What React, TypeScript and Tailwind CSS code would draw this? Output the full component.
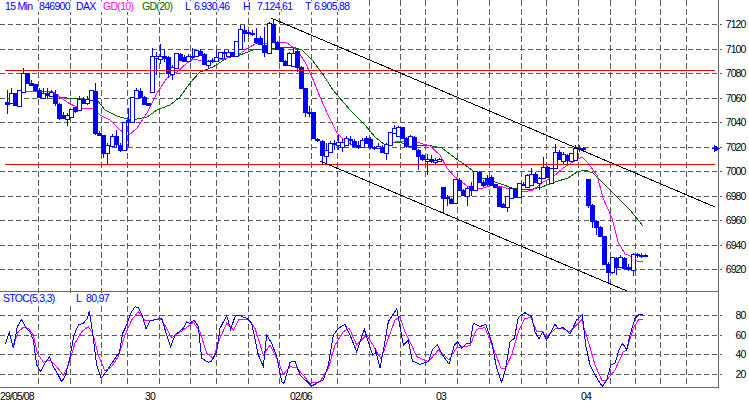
type Candle = [number, number, number, number, number, number];
type Pt = [number, number];

// x, wick top, wick bottom, body top, body bottom, filled
const candles: Candle[] = [
  [7, 90, 114, 102, 104, 1], [11, 88, 103, 93, 103, 0], [15, 93, 106, 93, 105, 1], [19, 90, 106, 90, 106, 0],
  [23, 68, 92, 73, 92, 0], [27, 73, 84, 73, 83, 1], [31, 80, 86, 83, 85, 1], [35, 84, 92, 84, 90, 1],
  [39, 88, 98, 90, 97, 1], [43, 88, 99, 93, 98, 0], [47, 88, 99, 93, 95, 1], [51, 90, 96, 92, 96, 0],
  [55, 90, 106, 94, 103, 1], [59, 103, 120, 104, 118, 1], [63, 112, 119, 115, 118, 1], [67, 113, 126, 115, 119, 0],
  [71, 109, 118, 109, 117, 0], [75, 107, 113, 107, 111, 1], [79, 96, 111, 99, 110, 0], [83, 97, 104, 99, 103, 1],
  [87, 96, 105, 99, 103, 0], [91, 90, 101, 90, 100, 0], [95, 83, 135, 91, 133, 1], [99, 131, 136, 133, 135, 1],
  [103, 135, 158, 135, 153, 1], [107, 143, 164, 145, 153, 0], [112, 134, 147, 136, 146, 0], [116, 130, 148, 136, 144, 1],
  [120, 143, 152, 145, 150, 1], [124, 122, 151, 122, 150, 0], [128, 108, 147, 120, 122, 1], [132, 97, 123, 97, 122, 0],
  [136, 88, 99, 90, 98, 0], [140, 88, 98, 91, 97, 1], [144, 96, 104, 97, 104, 1], [148, 103, 105, 103, 105, 1],
  [152, 48, 93, 56, 92, 0], [156, 52, 75, 56, 58, 0], [160, 44, 64, 56, 59, 0], [164, 49, 62, 56, 58, 1],
  [168, 56, 78, 57, 73, 1], [172, 65, 80, 67, 74, 0], [176, 53, 69, 53, 68, 0], [180, 53, 61, 54, 60, 1],
  [184, 55, 62, 57, 61, 1], [188, 54, 62, 56, 61, 0], [192, 48, 59, 56, 57, 1], [196, 50, 57, 50, 56, 0],
  [200, 49, 56, 51, 55, 1], [204, 53, 65, 54, 64, 1], [208, 60, 68, 61, 65, 0], [212, 58, 63, 60, 61, 1],
  [216, 50, 62, 57, 61, 0], [220, 52, 59, 52, 58, 0], [224, 50, 59, 52, 53, 1], [228, 50, 57, 52, 56, 0],
  [232, 52, 57, 52, 56, 1], [236, 41, 57, 41, 56, 0], [240, 25, 50, 29, 49, 0], [244, 25, 42, 30, 33, 1],
  [248, 30, 36, 32, 33, 1], [252, 30, 36, 33, 34, 1], [256, 28, 44, 38, 42, 1], [260, 36, 45, 38, 44, 1],
  [264, 27, 57, 45, 52, 1], [269, 22, 54, 23, 53, 0], [273, 20, 43, 24, 42, 1], [277, 41, 50, 42, 49, 1],
  [281, 47, 62, 48, 61, 1], [285, 60, 66, 61, 65, 1], [289, 52, 66, 53, 65, 0], [293, 48, 67, 53, 66, 0],
  [297, 48, 72, 51, 67, 1], [301, 66, 88, 67, 88, 1], [305, 88, 117, 88, 112, 1], [309, 106, 117, 112, 113, 1],
  [313, 112, 138, 112, 138, 1], [317, 138, 142, 139, 140, 1], [322, 140, 165, 141, 155, 1], [326, 143, 165, 150, 156, 0],
  [330, 141, 152, 143, 152, 0], [334, 140, 150, 143, 144, 1], [338, 135, 150, 142, 145, 0], [342, 139, 152, 142, 147, 0],
  [346, 136, 146, 138, 145, 0], [350, 136, 145, 139, 140, 1], [354, 139, 147, 141, 146, 1], [358, 141, 149, 145, 147, 1],
  [362, 138, 148, 140, 147, 0], [366, 136, 144, 138, 143, 1], [370, 137, 149, 139, 147, 1], [374, 146, 150, 147, 148, 1],
  [378, 143, 149, 146, 148, 0], [382, 145, 152, 147, 152, 1], [386, 143, 160, 144, 153, 0], [390, 132, 146, 132, 145, 0],
  [394, 125, 134, 128, 133, 0], [398, 126, 137, 127, 136, 0], [402, 127, 139, 127, 138, 1], [406, 137, 148, 138, 146, 1],
  [410, 135, 147, 136, 146, 0], [414, 136, 150, 137, 149, 1], [418, 149, 170, 150, 156, 1], [422, 154, 161, 155, 159, 1],
  [427, 154, 175, 159, 161, 0], [431, 155, 163, 159, 161, 1], [435, 158, 164, 160, 162, 0], [439, 158, 162, 159, 161, 0],
  [443, 187, 214, 187, 198, 1], [447, 195, 206, 197, 198, 1], [451, 198, 204, 199, 203, 1], [455, 179, 204, 179, 203, 0],
  [459, 178, 190, 180, 190, 1], [463, 189, 196, 190, 195, 1], [467, 187, 206, 188, 196, 0], [471, 182, 196, 186, 190, 1],
  [475, 171, 191, 171, 190, 0], [479, 171, 183, 172, 182, 1], [483, 180, 187, 182, 185, 1], [487, 175, 186, 178, 184, 1],
  [491, 175, 186, 177, 185, 1], [495, 184, 188, 184, 187, 1], [499, 186, 207, 187, 206, 1], [503, 203, 208, 204, 207, 1],
  [507, 196, 212, 196, 207, 0], [511, 187, 199, 188, 198, 0], [515, 188, 198, 189, 197, 1], [519, 183, 198, 183, 197, 0],
  [523, 182, 186, 184, 185, 1], [527, 174, 188, 175, 187, 0], [531, 168, 186, 174, 185, 0], [535, 172, 183, 174, 182, 1],
  [539, 177, 190, 178, 183, 0], [543, 157, 179, 167, 178, 0], [547, 166, 178, 167, 177, 1], [551, 168, 184, 168, 183, 0],
  [555, 144, 169, 152, 168, 0], [559, 150, 160, 152, 159, 1], [563, 152, 165, 154, 161, 0], [567, 154, 165, 155, 160, 1],
  [571, 153, 162, 153, 161, 0], [575, 145, 161, 148, 160, 0], [579, 145, 152, 148, 149, 1], [583, 147, 150, 148, 149, 1],
  [588, 179, 208, 179, 205, 1], [592, 204, 228, 205, 221, 1], [596, 220, 235, 221, 227, 1], [600, 226, 237, 227, 236, 1],
  [604, 236, 265, 236, 264, 1], [608, 262, 283, 264, 272, 1], [612, 257, 274, 257, 272, 0], [616, 257, 275, 258, 267, 1],
  [620, 255, 268, 257, 267, 0], [624, 257, 270, 258, 268, 1], [628, 264, 271, 267, 269, 1], [633, 253, 276, 254, 270, 0],
  [637, 253, 258, 254, 255, 1], [641, 253, 258, 255, 256, 1], [645, 254, 257, 255, 256, 1],
];

const maFast: Pt[] = [
  [22, 92], [33, 91], [53, 92], [60, 97], [70, 104], [80, 108], [92, 108], [100, 115], [110, 120], [120, 130],
  [128, 136], [137, 128], [147, 113], [157, 93], [167, 78], [177, 72], [187, 63], [193, 59], [203, 61], [217, 61],
  [230, 57], [238, 55], [248, 48], [257, 43], [267, 43], [278, 42], [287, 43], [297, 50], [305, 62], [312, 77],
  [320, 97], [328, 115], [337, 133], [345, 141], [353, 145], [363, 147], [375, 147], [383, 148], [390, 143], [400, 141],
  [410, 142], [420, 143], [430, 146], [440, 155], [447, 168], [455, 177], [463, 183], [473, 190], [483, 188], [493, 185],
  [503, 187], [513, 190], [523, 192], [533, 190], [543, 182], [553, 177], [563, 168], [573, 162], [582, 157], [588, 163],
  [597, 175], [603, 198], [612, 218], [618, 242], [625, 254], [633, 257], [638, 262], [643, 261],
];

const maSlow: Pt[] = [
  [59, 97], [67, 98], [80, 99], [97, 100], [105, 110], [117, 116], [127, 119], [137, 119], [147, 117], [157, 110],
  [170, 105], [180, 97], [190, 83], [200, 72], [213, 67], [227, 58], [240, 55], [253, 50], [267, 49], [283, 47],
  [293, 47], [302, 50], [312, 60], [322, 73], [333, 90], [350, 110], [365, 125], [375, 137], [385, 145], [395, 142],
  [415, 145], [432, 146], [442, 148], [455, 158], [468, 167], [482, 178], [498, 183], [512, 188], [528, 190], [542, 187],
  [555, 182], [568, 178], [577, 172], [585, 170], [593, 173], [605, 185], [618, 198], [630, 210], [643, 226],
];

// stochastic traces read off at 3x, shifted into page pixels below
const stocBlueL: Pt[] = [
  [15, 178], [28, 143], [40, 190], [52, 125], [65, 103], [78, 130], [90, 140], [100, 165], [110, 240], [122, 260],
  [135, 235], [148, 215], [160, 245], [172, 265], [185, 290], [197, 270], [210, 215], [222, 150], [235, 120], [250, 115],
  [262, 100], [268, 78], [278, 145], [290, 240], [303, 280], [320, 258], [335, 235], [350, 213], [358, 205], [368, 145],
  [380, 120], [392, 85], [405, 65], [415, 68], [428, 95], [438, 132], [450, 108], [470, 103], [485, 100], [500, 150],
  [512, 185], [525, 150], [550, 130], [560, 110], [570, 115], [582, 105], [595, 125], [605, 220], [625, 232], [635, 228],
  [650, 200], [660, 130], [680, 92], [692, 133], [705, 95], [715, 90], [740, 100], [755, 115], [775, 210], [790, 245],
  [800, 150], [815, 175], [830, 215], [845, 290], [852, 295], [870, 232], [885, 228], [900, 270], [935, 303], [950, 295],
  [970, 285], [985, 240], [1000, 150], [1015, 130], [1035, 118], [1050, 150], [1070, 200], [1085, 155], [1093, 133], [1105, 170],
  [1118, 210], [1125, 205],
];
const stocPinkL: Pt[] = [
  [40, 180], [55, 140], [70, 127], [85, 130], [100, 150], [112, 205], [130, 232], [150, 225], [170, 245], [190, 270],
  [205, 240], [225, 175], [245, 140], [265, 125], [278, 145], [295, 210], [315, 258], [335, 245], [355, 215], [375, 150],
  [395, 105], [415, 80], [435, 108], [460, 105], [485, 103], [515, 158], [550, 135], [580, 112], [600, 140], [620, 205],
  [640, 220], [660, 160], [680, 115], [700, 135], [715, 105], [745, 103], [765, 130], [790, 210], [810, 180], [830, 220],
  [850, 268], [870, 245], [890, 248], [930, 295], [960, 290], [985, 250], [1005, 180], [1030, 140], [1048, 130], [1070, 180],
  [1100, 150], [1125, 190],
];
const stocBlueR: Pt[] = [
  [0, 190], [15, 250], [28, 180], [40, 110], [60, 80], [65, 70], [85, 180], [100, 165], [112, 228], [135, 238],
  [160, 230], [172, 195], [187, 178], [200, 205], [222, 238], [238, 180], [248, 170], [260, 190], [275, 175], [285, 175],
  [295, 115], [315, 125], [332, 118], [350, 170], [365, 250], [380, 292], [392, 250], [405, 170], [418, 160], [430, 97],
  [450, 83], [470, 95], [480, 140], [492, 162], [503, 140], [515, 165], [540, 118], [550, 130], [565, 128], [585, 147],
  [605, 105], [622, 90], [632, 180], [645, 240], [660, 270], [682, 305], [695, 285], [708, 240], [720, 235], [732, 195],
  [743, 175], [755, 195], [765, 150], [780, 100], [790, 90], [803, 88],
];
const stocPinkR: Pt[] = [
  [0, 190], [18, 222], [40, 160], [60, 105], [75, 95], [90, 140], [105, 170], [125, 215], [160, 230], [190, 195],
  [222, 225], [245, 188], [265, 185], [285, 182], [305, 133], [330, 128], [355, 190], [378, 250], [390, 252], [410, 210],
  [430, 140], [450, 100], [468, 98], [485, 140], [500, 140], [515, 155], [540, 132], [560, 130], [585, 140], [620, 105],
  [640, 170], [660, 240], [680, 285], [695, 285], [720, 255], [745, 200], [755, 195], [775, 130], [790, 105], [803, 103],
];

const toPage = (left: Pt[], right: Pt[]) =>
  [...left.map(([x, y]) => `${x / 3},${285 + y / 3}`), ...right.map(([x, y]) => `${375 + x / 3},${285 + y / 3}`)].join(' ');
const line = (pts: Pt[]) => pts.map(([x, y]) => `${x},${y}`).join(' ');

const gridX = [38, 70, 101, 127, 159, 190, 216, 248, 279, 311, 337, 369, 400, 425, 457, 489, 521, 546, 578, 610, 635, 660, 686];
const priceRows: [number, string][] = [
  [24, '7120'], [49, '7100'], [73, '7080'], [98, '7060'], [122, '7040'], [147, '7020'],
  [171, '7000'], [196, '6980'], [220, '6960'], [245, '6940'], [269, '6920'],
];
const stocRows: [number, string][] = [[315, '80'], [335, '60'], [354, '40'], [374, '20']];
const dates: [number, string][] = [[0, '29/05/08'], [145, '30'], [290, '02/06'], [436, '03'], [581, '04']];

const Chart = () => (
  <svg width={749} height={405} viewBox="0 0 749 405" className="block" shapeRendering="crispEdges">
    {gridX.map((x) => (
      <line key={x} x1={x + 0.5} y1={0} x2={x + 0.5} y2={388} stroke="#5a5a5a" strokeDasharray="6 3" />
    ))}
    {[...priceRows, ...stocRows].map(([y]) => (
      <line key={y} x1={0} y1={y + 0.5} x2={722} y2={y + 0.5} stroke="#5a5a5a" strokeDasharray="5 3" />
    ))}
    <line x1={0} y1={291.5} x2={719} y2={291.5} stroke="#666666" />
    <line x1={0} y1={387.5} x2={719} y2={387.5} stroke="#666666" />
    <line x1={718.5} y1={0} x2={718.5} y2={388} stroke="#666666" />

    <polyline points={line(maSlow)} fill="none" stroke="#006400" />
    <polyline points={line(maFast)} fill="none" stroke="#ff00ff" />

    {candles.map(([x, wt, wb, bt, bb, filled]) => (
      <g key={x}>
        <line x1={x + 0.5} y1={wt} x2={x + 0.5} y2={wb} stroke="#0000ff" />
        <rect
          x={x - 1.5}
          y={bt + 0.5}
          width={4}
          height={Math.max(bb - bt, 1)}
          fill={filled ? '#0000ff' : '#ffffff'}
          stroke="#0000ff"
        />
      </g>
    ))}

    <rect x={5} y={70} width={710} height={1} fill="#ff0000" />
    <rect x={5} y={164} width={710} height={1} fill="#ff0000" />
    <line x1={271} y1={18} x2={715} y2={207} stroke="#000000" />
    <line x1={320} y1={161} x2={627} y2={291} stroke="#000000" />

    <polyline points={toPage(stocPinkL, stocPinkR)} fill="none" stroke="#ff00ff" />
    <polyline points={toPage(stocBlueL, stocBlueR)} fill="none" stroke="#0000ff" />

    <path d="M712 148.5H714M714 145.5L719 148.5L714 151.5Z" fill="#0000ff" stroke="#0000ff" />

    <g className="font-['Liberation_Sans',sans-serif] text-[10.5px] tracking-[-0.9px]" fill="#000000" textAnchor="end" shapeRendering="auto">
      {[...priceRows, ...stocRows].map(([y, label]) => (
        <text key={label} x={745.5} y={y + 4}>{label}</text>
      ))}
    </g>
    <g className="font-['Liberation_Sans',sans-serif] text-[10.5px] tracking-[-0.9px]" fill="#000000">
      {dates.map(([x, label]) => (
        <text key={label} x={x} y={400}>{label}</text>
      ))}
    </g>
  </svg>
);

const App = () => {
  return (
    <div className="relative w-[749px] h-[405px] overflow-hidden bg-white font-['Liberation_Sans',sans-serif] text-[10.5px] leading-none tracking-[-0.7px] text-[#0000ff]">
      <Chart />
      <div className="absolute left-[5px] top-[1px] flex bg-white whitespace-pre">
        <span className="w-[34px]">15 Min</span>
        <span className="w-[37px]">846900</span>
        <span className="w-[27px]">DAX</span>
        <span className="w-[39px] text-[#ff00ff]">GD(10)</span>
        <span className="w-[43px] text-[#006400]">GD(20)</span>
        <span className="w-[9px]">L</span>
        <span className="w-[49px]">6.930,46</span>
        <span className="w-[14px]">H</span>
        <span className="w-[48px]">7.124,61</span>
        <span className="w-[9px]">T</span>
        <span>6.905,88</span>
      </div>
      <div className="absolute left-[3px] top-[293px] flex bg-white whitespace-pre">
        <span className="w-[73px]">STOC(5,3,3)</span>
        <span className="w-[10px]">L</span>
        <span>80,97</span>
      </div>
    </div>
  );
};

export default App;
